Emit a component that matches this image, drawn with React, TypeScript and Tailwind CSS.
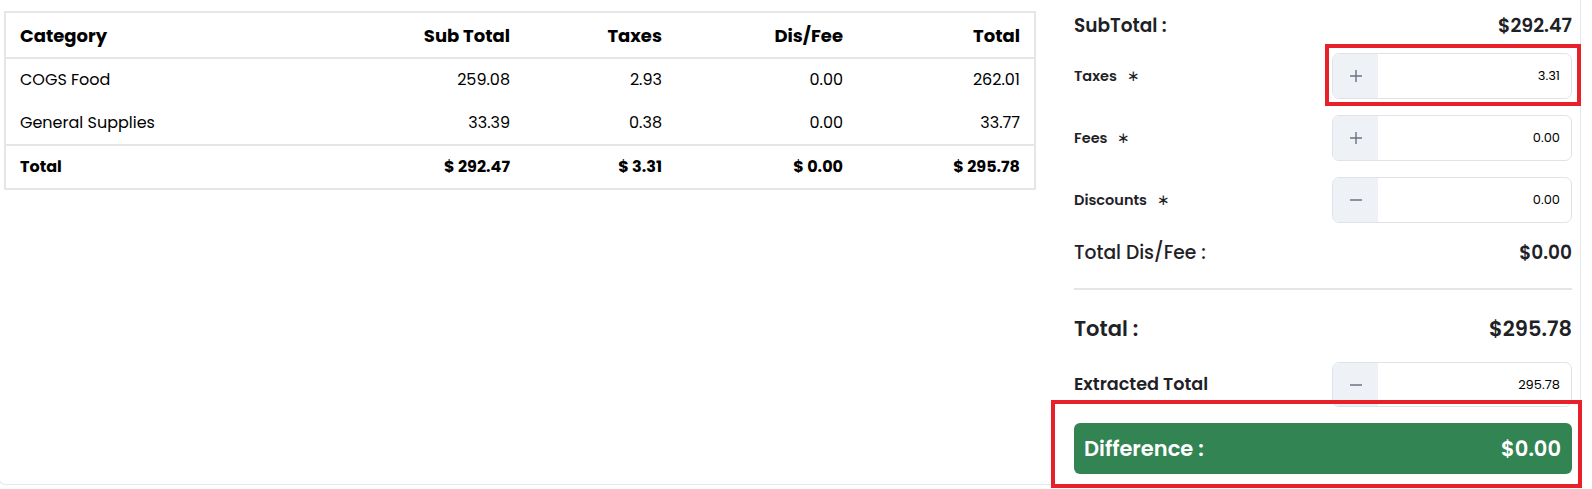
import React from "react";

function Plus() {
  return (
    <svg width="14" height="14" viewBox="0 0 14 14" fill="none">
      <path d="M7 1v12M1 7h12" stroke="#6b7280" strokeWidth="1.4" />
    </svg>
  );
}
function Minus() {
  return (
    <svg width="14" height="14" viewBox="0 0 14 14" fill="none">
      <path d="M1 7h12" stroke="#6b7280" strokeWidth="1.4" />
    </svg>
  );
}

function AmountInput({ value, sign, h = "h-[46px]" }: { value: string; sign: "+" | "-"; h?: string }) {
  return (
    <div className={`flex w-[240px] ${h} border border-[#dfe3e8] rounded-[7px] overflow-hidden bg-white`}>
      <div className="w-[45px] bg-[#eef1f6] flex items-center justify-center">
        {sign === "+" ? <Plus /> : <Minus />}
      </div>
      <div className="flex-1 flex items-center justify-end pr-[11px] text-[13px] text-black">{value}</div>
    </div>
  );
}

const rows = [
  ["COGS Food", "259.08", "2.93", "0.00", "262.01"],
  ["General Supplies", "33.39", "0.38", "0.00", "33.77"],
];

export default function App() {
  return (
    <div
      className="relative w-[1592px] h-[489px] bg-white overflow-hidden text-[#111]"
      style={{ fontFamily: "Poppins, Inter, 'Noto Sans', sans-serif" }}
    >
      <div className="flex -ml-[1px] w-[1582px] h-[485px] border border-t-0 border-[#e5e7eb] rounded-b-md">
        {/* left table */}
        <div className="pl-[4px] pt-[11px] w-[1036px]">
          <div className="w-[1032px] border-2 border-[#e6e6e6]">
            <table className="w-full table-fixed border-collapse">
              <colgroup>
                <col className="w-[324px]" />
                <col className="w-[189px]" />
                <col className="w-[159px]" />
                <col className="w-[181px]" />
                <col className="w-[175px]" />
              </colgroup>
              <thead>
                <tr className="h-[45px] border-b-2 border-[#e6e6e6] text-[18px] font-semibold text-black">
                  <th className="text-left pl-[14px]">Category</th>
                  <th className="text-right pr-[9px]">Sub Total</th>
                  <th className="text-right pr-[16px]">Taxes</th>
                  <th className="text-right pr-[16px]">Dis/Fee</th>
                  <th className="text-right pr-[14px]">Total</th>
                </tr>
              </thead>
              <tbody className="text-[16px] text-black">
                {rows.map((r, i) => (
                  <tr key={i} className={`h-[43.5px] ${i === 1 ? "border-b-2 border-[#e6e6e6]" : ""}`}>
                    <td className="pl-[14px]">{r[0]}</td>
                    <td className="text-right pr-[9px]">{r[1]}</td>
                    <td className="text-right pr-[16px]">{r[2]}</td>
                    <td className="text-right pr-[16px]">{r[3]}</td>
                    <td className="text-right pr-[14px]">{r[4]}</td>
                  </tr>
                ))}
                <tr className="h-[43px] font-bold">
                  <td className="pl-[14px]">Total</td>
                  <td className="text-right pr-[9px]">$ 292.47</td>
                  <td className="text-right pr-[16px]">$ 3.31</td>
                  <td className="text-right pr-[16px]">$ 0.00</td>
                  <td className="text-right pr-[14px]">$ 295.78</td>
                </tr>
              </tbody>
            </table>
          </div>
        </div>

        {/* right summary */}
        <div className="flex-1 pl-[38px] pr-[8px] flex flex-col text-[#1e2125]">
          <div className="h-[28px] mt-[12px] flex items-center justify-between font-semibold">
            <span className="text-[18.5px]">SubTotal :</span>
            <span className="text-[19px]">$292.47</span>
          </div>
          <div className="mt-[13px] flex items-center justify-between">
            <span className="text-[14.5px] font-semibold pt-[1px]">
              Taxes<span className="ml-[10px] font-normal">∗</span>
            </span>
            <AmountInput value="3.31" sign="+" />
          </div>
          <div className="mt-[16px] flex items-center justify-between">
            <span className="text-[14.5px] font-semibold pt-[1px]">
              Fees<span className="ml-[10px] font-normal">∗</span>
            </span>
            <AmountInput value="0.00" sign="+" />
          </div>
          <div className="mt-[16px] flex items-center justify-between">
            <span className="text-[14.5px] font-semibold pt-[1px]">
              Discounts<span className="ml-[10px] font-normal">∗</span>
            </span>
            <AmountInput value="0.00" sign="-" />
          </div>
          <div className="mt-[16px] h-[28px] flex items-center justify-between">
            <span className="text-[18.7px] font-medium">Total Dis/Fee :</span>
            <span className="text-[18.5px] font-semibold">$0.00</span>
          </div>
          <div className="mt-[21px] h-[2px] bg-[#e5e5e5]" />
          <div className="mt-[24px] h-[30px] flex items-center justify-between text-[21px] font-semibold">
            <span>Total :</span>
            <span>$295.78</span>
          </div>
          <div className="mt-[18px] flex items-center justify-between">
            <span className="text-[17.6px] font-semibold">Extracted Total</span>
            <AmountInput value="295.78" sign="-" h="h-[45px]" />
          </div>
          <div className="mt-[16px] h-[51px] rounded-[6px] bg-[#338453] flex items-center justify-between pl-[10px] pr-[11px] text-white text-[21px] font-semibold">
            <span>Difference :</span>
            <span>$0.00</span>
          </div>
        </div>
      </div>

      {/* red annotation boxes */}
      <div className="absolute left-[1325px] top-[44px] w-[256px] h-[62px] border-[4px] border-[#e8202a] pointer-events-none" />
      <div className="absolute left-[1051px] top-[400px] w-[531px] h-[88px] border-[4px] border-[#e8202a] pointer-events-none" />
    </div>
  );
}
